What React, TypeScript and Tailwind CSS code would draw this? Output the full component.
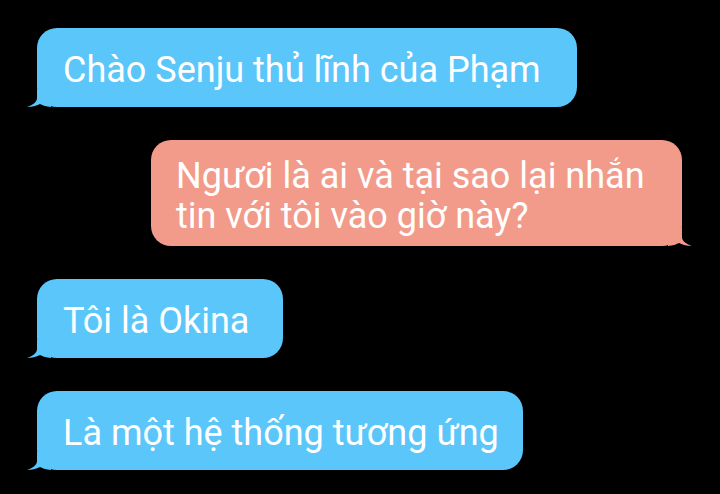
import React from 'react';

type Side = 'left' | 'right';

function Tail({ side, color }: { side: Side; color: string }) {
  // small curled tail at the bottom corner of a bubble
  if (side === 'left') {
    return (
      <svg className="absolute -left-[10px] bottom-0" width="24" height="18" viewBox="0 0 24 18">
        <path d="M10 0 L10 9 C10 13 6 16 0 18 C5 18 9 17 13 15 C16 16.5 19 17.5 24 18 L24 0 Z" fill={color} />
      </svg>
    );
  }
  return (
    <svg className="absolute -right-[10px] bottom-0" width="24" height="18" viewBox="0 0 24 18">
      <path d="M14 0 L14 9 C14 13 18 16 24 18 C19 18 15 17 11 15 C8 16.5 5 17.5 0 18 L0 0 Z" fill={color} />
    </svg>
  );
}

function Bubble({
  side,
  className,
  children,
}: {
  side: Side;
  className: string;
  children: React.ReactNode;
}) {
  const color = side === 'left' ? '#5ac6fa' : '#f29b8a';
  return (
    <div className={`relative rounded-[20px] flex items-center ${className}`}>
      <Tail side={side} color={color} />
      <span className="relative pt-[5px] text-white text-[36px] leading-[40px] font-['Roboto',sans-serif] whitespace-nowrap">
        {children}
      </span>
    </div>
  );
}

export default function App() {
  return (
    <div className="w-[720px] h-[494px] bg-black overflow-hidden">
      <div className="flex flex-col gap-[33px] pt-[28px]">
        <div className="pl-[37px]">
          <Bubble side="left" className="w-[540px] h-[79px] pl-[26px] bg-[#5ac6fa]">
            Chào Senju thủ lĩnh của Phạm
          </Bubble>
        </div>
        <div className="pl-[151px]">
          <Bubble side="right" className="w-[531px] h-[106px] pl-[25px] bg-[#f29b8a]">
            Ngươi là ai và tại sao lại nhắn
            <br />
            tin với tôi vào giờ này?
          </Bubble>
        </div>
        <div className="pl-[37px]">
          <Bubble side="left" className="w-[246px] h-[79px] pl-[26px] bg-[#5ac6fa]">
            Tôi là Okina
          </Bubble>
        </div>
        <div className="pl-[37px]">
          <Bubble side="left" className="w-[486px] h-[79px] pl-[26px] bg-[#5ac6fa]">
            Là một hệ thống tương ứng
          </Bubble>
        </div>
      </div>
    </div>
  );
}
